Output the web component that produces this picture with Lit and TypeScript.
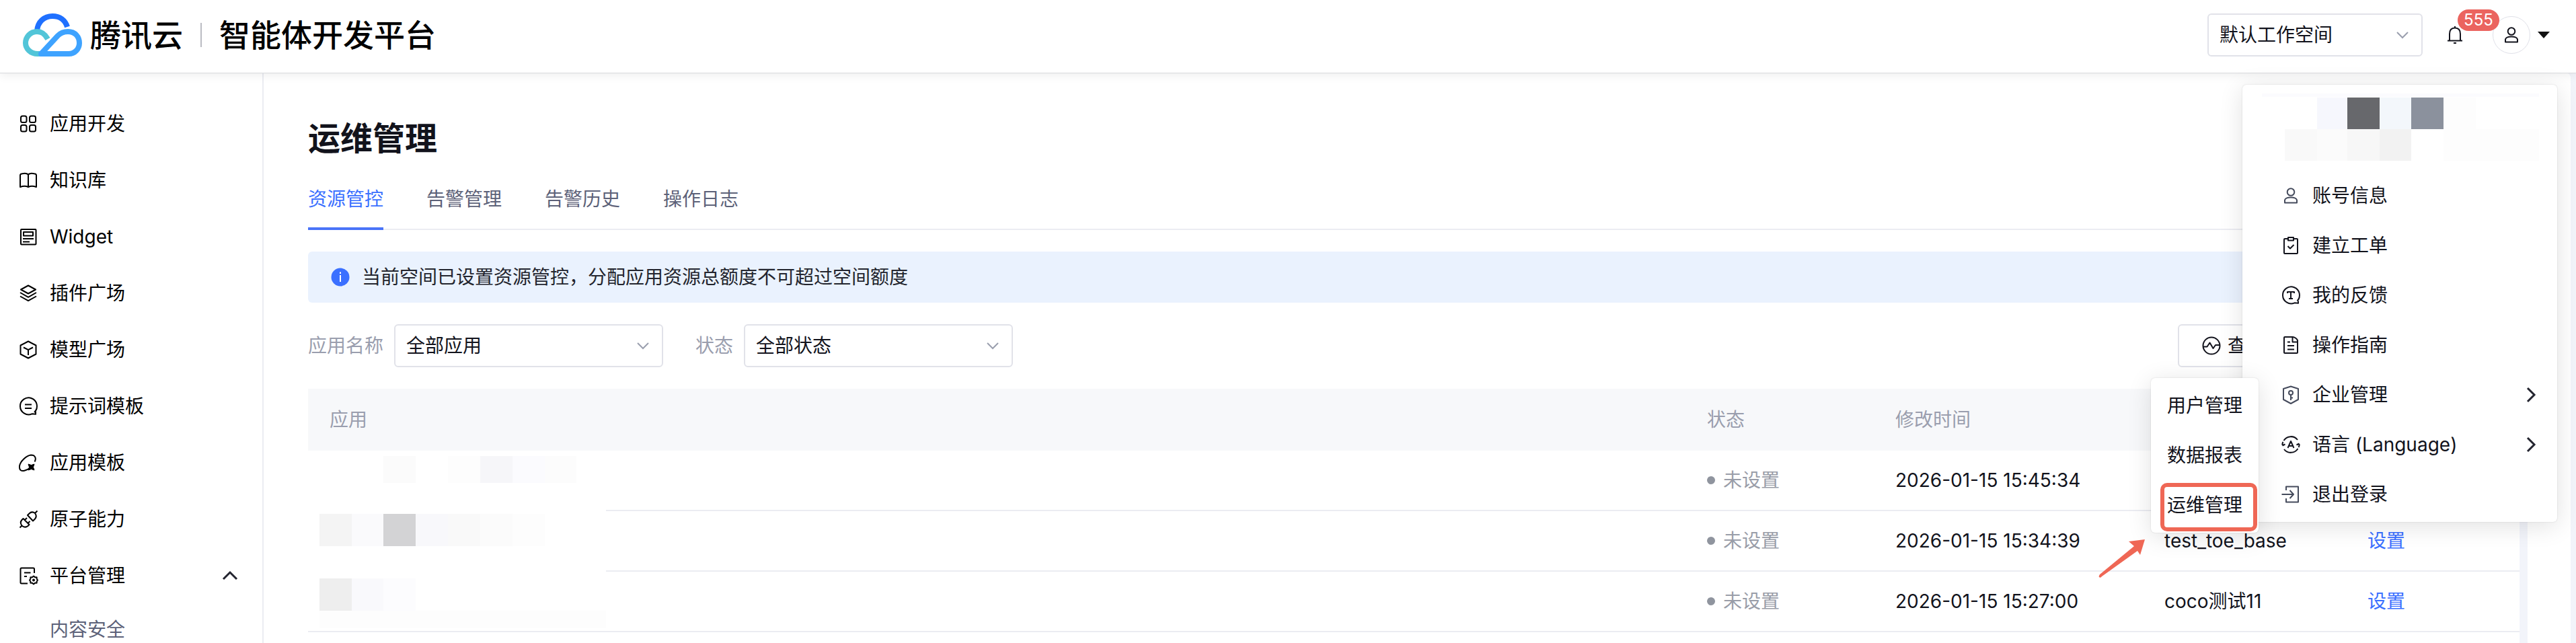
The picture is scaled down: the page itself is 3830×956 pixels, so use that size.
import { LitElement, html, css, svg, TemplateResult } from "lit";
import { customElement, property } from "lit/decorators.js";

const icons: Record<string, TemplateResult> = {
  apps: svg`<rect x="5" y="4.500" width="8.500" height="9.500" rx="2.500"/><rect x="18" y="4.500" width="9" height="9.500" rx="2.500"/><rect x="5" y="18" width="8.500" height="9.500" rx="2.500"/><rect x="18" y="18" width="9" height="9.500" rx="2.500"/>`,
  book: svg`<path d="M16 7.500C14 5.500 10 5.500 7 6.200Q4 6.500 4 8.500V26C8 24.500 13 24.500 16 26C19 24.500 24 24.500 28 26V8.500Q28 6.500 25 6.200C22 5.500 18 5.500 16 7.500ZM16 7.500V26"/>`,
  widget: svg`<rect x="5" y="5" width="22.500" height="22.500" rx="1"/><rect x="9" y="9" width="14" height="5.500"/><path d="M8 19H24M8 23.500H18"/>`,
  layers: svg`<path d="M16 4.500L27 10.500L16 16.500L5 10.500ZM4 15L16 21.800L28 15M4 20.500L16 27.200L28 20.500"/>`,
  cube: svg`<path d="M16 3.500L27.500 9.500V22.500L16 28.500L4.500 22.500V9.500ZM9 12.500L16 16.200L23 12.500M16 16.200V24"/>`,
  prompt: svg`<path d="M25.500 24.500A12.500 12.500 0 1 0 21.500 27.300L27 27.800V24.500ZM11 13.500H21M11 19H21"/>`,
  template: svg`<path d="M25.500 14.500C28.500 9 26 4.500 20 4.500C13 5.500 4 14 3 21C2.500 27.500 6 29 11 27.500C14 26.800 16 25.600 18 24"/><path d="M16 18L20.500 19.500L25 18L23.500 22.500L25 27L20.500 25.500L16 27L17.500 22.500Z" fill="currentColor" stroke-width="1"/>`,
  plug: svg`<path d="M3.500 28.500L6.500 25.500M6.500 17Q3 21 6.500 25.500Q11 29.500 15.500 26L17.500 24L8.500 15ZM11 17L14 14M15.500 22L18.500 19M29.500 3.500L26 7M15 10L17.500 7.500Q21.500 3.500 26 7Q29.500 11.500 26 15.500L23 18.500Z"/>`,
  platform: svg`<path d="M25 12V6Q25 4.500 23.500 4.500H6Q4.500 4.500 4.500 6V26Q4.500 27.500 6 27.500H15M10 11.500H19.500M10 17H14"/><path d="M24 16.500L26 18.300L28.600 18.200L28.700 20.800L30 22.500L28.700 24.300L28.600 26.800L26 26.800L24 28.500L22 26.800L19.400 26.800L19.300 24.300L18 22.500L19.300 20.800L19.400 18.200L22 18.300Z"/><circle cx="24" cy="22.500" r="1"/>`,
  user: svg`<circle cx="16" cy="10.500" r="5.300"/><path d="M7 26.500V22.500Q8 18.500 16 18.500Q24 18.500 25 22.500V26.500Z"/>`,
  ticket: svg`<path d="M12 6H7Q6 6 6 7V27Q6 28 7 28H25Q26 28 26 27V7Q26 6 25 6H20M12 4H20V8.500H12ZM11.500 17L15 20.500L20.500 15"/>`,
  feedback: svg`<path d="M25.500 24.500A12.500 12.500 0 1 0 21.500 27.300L27 27.800V24.500M11 13V11H21V13M16 11V21M13 21H19"/>`,
  guide: svg`<path d="M19 4H7Q6 4 6 5V27Q6 28 7 28H25Q26 28 26 27V9Q24 5 19 4ZM18.500 4V11.500H26M11 11.500H15M11 17H21M11 22.500H21"/>`,
  shield: svg`<path d="M16 3.500L27 7V23L16 29L5 23V7Z"/><circle cx="16" cy="13" r="3"/><path d="M16 16V24M16 20.500H19"/>`,
  language: svg`<path d="M5.500 10A12.500 12.500 0 0 1 26 9M26.500 22A12.500 12.500 0 0 1 6 23M28.500 15V17.500A12.500 12.500 0 0 1 27.500 20M24.500 16.500L28.500 14.500M3.500 17V14.500A12.500 12.500 0 0 1 4.500 12M7.500 15.500L3.500 17.500M11.500 21L16 11L20.500 21M13 18H19"/>`,
  logout: svg`<path d="M9 10V4.500H27V27.500H9V22M2.500 16H19.500M14.500 10L20 16L14.500 22"/>`,
  pulse: svg`<circle cx="16" cy="16" r="12.500"/><path d="M4 17.500H9.500L13.500 11.500L18.500 20L22 15H28"/>`,
  bell: svg`<path d="M16 3V5M8 24V14.500Q8 5.500 16 5.500Q24 5.500 24 14.500V24M5 24.500H27M14 28H18"/>`,
};

@customElement("line-icon")
export class LineIcon extends LitElement {
  static styles = css`
    :host { display: block; flex: none; width: 32px; height: 32px; }
    svg { display: block; width: 100%; height: 100%; fill: none; stroke: currentColor; stroke-width: 2; stroke-linejoin: round; }
  `;
  @property() name = "apps";
  render() {
    return html`<svg viewBox="0 0 32 32" aria-hidden="true">${icons[this.name]}</svg>`;
  }
}

@customElement("drop-down")
export class DropDown extends LitElement {
  static styles = css`
    :host { display: flex; align-items: center; gap: 16px; font-size: 28px; color: #9a9eae; }
    .box { display: grid; width: var(--select-width, 400px); align-items: center; }
    select {
      grid-area: 1 / 1; width: 100%; height: 64px; padding: 0 56px 0 16px; border: 2px solid #e1e2e9; border-radius: 6px;
      appearance: none; background: #fff; color: #12131c; font: inherit;
    }
    svg { grid-area: 1 / 1; justify-self: end; margin-right: 20px; width: 20px; height: 20px; fill: none; stroke: #9a9fae; stroke-width: 2; pointer-events: none; }
  `;
  @property() label = "";
  @property() value = "";
  @property({ type: Boolean }) bare = false;
  render() {
    return html`
      ${this.bare ? "" : html`<label for="field">${this.label}</label>`}
      <div class="box">
        <select id="field" aria-label=${this.label}><option>${this.value}</option></select>
        <svg viewBox="0 0 20 20"><path d="M2 6L10 14L18 6"/></svg>
      </div>`;
  }
}

const nav = [
  ["apps", "应用开发"],
  ["book", "知识库"],
  ["widget", "Widget"],
  ["layers", "插件广场"],
  ["cube", "模型广场"],
  ["prompt", "提示词模板"],
  ["template", "应用模板"],
  ["plug", "原子能力"],
];

const menu: [string, string, boolean][] = [
  ["user", "账号信息", false],
  ["ticket", "建立工单", false],
  ["feedback", "我的反馈", false],
  ["guide", "操作指南", false],
  ["shield", "企业管理", true],
  ["language", "语言 (Language)", true],
  ["logout", "退出登录", false],
];
const softIcons = ["user", "shield", "logout"];

const rows = [
  { time: "2026-01-15 15:45:34", user: "", action: "" },
  { time: "2026-01-15 15:34:39", user: "test_toe_base", action: "设置" },
  { time: "2026-01-15 15:27:00", user: "coco测试11", action: "设置" },
];

type Block = [number, number, number, number, string];
const tableMask: Block[] = [
  [0, 0, 443, 260, "#ffffff"],
  [112, 4, 48, 40, "#fbfbfb"], [208, 4, 48, 40, "#fdfdfd"], [256, 4, 48, 40, "#f6f6f9"], [304, 4, 48, 40, "#fbfbfe"], [352, 4, 47, 40, "#fcfcfc"],
  [17, 90, 48, 48, "#f4f4f4"], [65, 90, 47, 48, "#fafafc"], [112, 90, 48, 48, "#d3d3d5"], [160, 90, 48, 48, "#f8f8fb"], [208, 90, 48, 48, "#f9f9f9"], [256, 90, 48, 48, "#fbfbfb"], [304, 90, 48, 48, "#fdfdfd"],
  [17, 186, 48, 48, "#eeeeee"], [65, 186, 47, 48, "#f9f9fc"], [112, 186, 48, 48, "#fcfcfe"],
  [17, 234, 426, 26, "#fdfdfd"],
];
const accountMask: Block[] = [
  [0, 0, 412, 5, "#fbfbfe"],
  [82, 6, 45, 47, "#f6f7fd"], [127, 6, 48, 47, "#67686c"], [175, 6, 47, 47, "#f3f7fb"], [222, 6, 48, 47, "#8b919d"], [270, 6, 48, 47, "#fdfdfd"],
  [34, 53, 48, 47, "#f9f9f9"], [82, 53, 45, 47, "#fbfbfb"], [127, 53, 48, 47, "#f7f7f7"], [175, 53, 47, 47, "#f2f2f2"], [270, 53, 142, 47, "#fdfdfd"],
];
const blocks = (list: Block[]) =>
  list.map(([x, y, w, h, c]) => svg`<rect x=${x} y=${y} width=${w} height=${h} fill=${c} />`);

@customElement("app-root")
export class AppRoot extends LitElement {
  static styles = css`
    :host {
      display: flex; flex-direction: column; position: relative; height: 100vh; overflow: hidden; background: #f2f4fa;
      font-family: Inter, "Noto Sans CJK SC", sans-serif; font-size: 28px; line-height: 40px; color: #12131c;
    }
    * { box-sizing: border-box; }
    button { font: inherit; color: inherit; background: none; border: 0; padding: 0; text-align: left; }
    a { color: inherit; text-decoration: none; }

    .top {
      position: relative; z-index: 1; flex: none; display: flex; align-items: center; height: 108px; padding: 0 38px 4px 32px; background: #fff;
      box-shadow: 0 1px 1px #dcdde0, 0 4px 14px rgba(0, 0, 0, 0.07);
    }
    .logo { width: 92px; height: 72px; }
    .brand { margin-left: 10px; font-size: 46px; line-height: 64px; font-weight: 500; color: #000; }
    .bar { width: 2px; height: 36px; margin: 0 26px; background: #babbc2; }
    .product { flex: 1; font-size: 46px; line-height: 64px; font-weight: 500; color: #000; }
    .space { --select-width: 320px; }
    .bell { display: grid; margin-left: 32px; }
    .badge {
      position: absolute; right: 114px; top: 14px; z-index: 1; width: 62px; height: 32px; border-radius: 16px;
      background: #eb645f; color: #fff; font-size: 24px; line-height: 32px; text-align: center;
    }
    .avatar { display: grid; place-items: center; width: 56px; height: 56px; margin-left: 40px; border: 1px solid #dfe0e8; border-radius: 50%; }
    .caret { margin-left: 10px; width: 20px; height: 12px; }

    .body { flex: 1; display: flex; min-height: 0; }
    .side { flex: none; width: 392px; padding: 34px 36px 0 26px; border-right: 2px solid #ebecf2; background: #fff; overflow: hidden; color: #000; }
    .link { display: flex; align-items: center; gap: 16px; width: 100%; height: 84px; }
    .link span { flex: 1; }
    .chev { width: 24px; height: 24px; fill: none; stroke: #23242f; stroke-width: 3; }
    .sub { display: block; padding: 18px 0 0 48px; color: #5c6178; }

    .main { flex: 1; display: flex; flex-direction: column; min-width: 0; margin-right: 8px; padding: 66px 64px 0 66px; border-radius: 0 8px 0 0; background: #fff; }
    h1 { margin: 0; font-size: 48px; line-height: 64px; font-weight: 600; }
    .tabs { display: flex; gap: 64px; margin-top: 30px; border-bottom: 2px solid #ebecf2; color: #5c6178; }
    .tab { height: 74px; margin-bottom: -2px; padding: 8px 0 22px; border-bottom: 4px solid transparent; }
    .tab.on { color: #3b70ff; border-color: #4a74f8; }
    .notice { display: flex; align-items: center; gap: 16px; height: 76px; margin-top: 32px; padding: 0 32px; border-radius: 6px; background: #eaf2fe; color: #23252e; }
    .info { width: 32px; height: 32px; }
    .filters { display: flex; align-items: center; gap: 48px; margin-top: 32px; }
    .usage { display: flex; align-items: center; gap: 8px; width: 508px; height: 64px; margin: 0 12px 0 auto; padding: 0 32px; border: 2px solid #e1e2e9; border-radius: 6px; }

    .grid { position: relative; flex: 1; min-height: 0; margin-top: 32px; padding-right: 12px; background: linear-gradient(#f2f4fa, #f2f4fa) right / 12px 100% no-repeat; }
    table { width: 100%; border-collapse: separate; border-spacing: 0; table-layout: fixed; background: #fff; }
    th, td { padding: 0 32px; text-align: left; font-weight: 400; white-space: nowrap; }
    th { height: 92px; background: #f7f8fa; color: #9a9eae; }
    td { height: 90px; border-bottom: 2px solid #ebecf2; }
    .c-state { width: 280px; }
    .c-time { width: 400px; }
    .c-user { width: 302px; }
    .c-op { width: 258px; }
    .state { display: flex; align-items: center; gap: 12px; color: #999da8; }
    .state i { width: 12px; height: 12px; border-radius: 50%; background: #8f949e; }
    .set { color: #3b70ff; }
    .mask { position: absolute; left: 0; top: 96px; width: 443px; height: 260px; }

    .panel { position: absolute; z-index: 2; top: 126px; right: 28px; width: 468px; padding: 13px 29px 4px; border-radius: 6px; background: #fff; box-shadow: 0 6px 36px rgba(0, 0, 0, 0.12), 0 0 2px rgba(0, 0, 0, 0.16); }
    .who { display: block; width: 412px; height: 100px; margin-bottom: 15px; }
    .item { display: flex; align-items: center; gap: 16px; width: 100%; height: 74px; padding-left: 27px; }
    .item span { flex: 1; }
    .soft { color: #454b5c; }
    .fly { position: absolute; z-index: 3; top: 436px; right: 444px; width: 160px; padding: 4px 0; border-radius: 6px; background: #fff; box-shadow: 0 6px 36px rgba(0, 0, 0, 0.12), 0 0 2px rgba(0, 0, 0, 0.16); }
    .fly button { display: block; width: 100%; height: 74px; padding: 0 24px; white-space: nowrap; }
    .ring { position: absolute; left: 14px; top: 156px; width: 144px; height: 72px; border: 6px solid #ef6755; border-radius: 10px; pointer-events: none; }
    .arrow { position: absolute; left: -80px; top: 238px; width: 72px; height: 60px; fill: #ef6755; }
  `;

  render() {
    return html`
      <header class="top">
        <svg class="logo" viewBox="0 0 92 72" fill="none" aria-hidden="true">
          <path d="M23 30C24 16 34 8 46 8C57 8 65 14 68 24" stroke="#1f70ff" stroke-width="8"/>
          <path d="M39 42C34 33 29 31 23 31C13 31 6 39 6 48C6 56 13 64 24 64H30" stroke="#52c5d8" stroke-width="8"/>
          <path d="M29 64L54 37C59 32 64 31 69 31C80 31 86 39 86 48C86 56 80 64 70 64Z" stroke="#3ea3ff" stroke-width="8" stroke-linejoin="round"/>
        </svg>
        <span class="brand">腾讯云</span>
        <span class="bar"></span>
        <span class="product">智能体开发平台</span>
        <drop-down class="space" bare label="工作空间" value="默认工作空间"></drop-down>
        <button class="bell" aria-label="消息"><line-icon name="bell"></line-icon></button>
        <span class="badge">555</span>
        <button class="avatar" aria-label="账号"><line-icon name="user"></line-icon></button>
        <svg class="caret" viewBox="0 0 20 12"><path d="M1 1H19L10 11Z" fill="#111"/></svg>
      </header>

      <div class="body">
        <nav class="side">
          ${nav.map(([icon, text]) => html`<a class="link" href="#"><line-icon name=${icon}></line-icon><span>${text}</span></a>`)}
          <button class="link"><line-icon name="platform"></line-icon><span>平台管理</span>
            <svg class="chev" viewBox="0 0 24 24"><path d="M2 17L12 7L22 17"/></svg></button>
          <a class="sub" href="#">内容安全</a>
        </nav>

        <main class="main">
          <h1>运维管理</h1>
          <div class="tabs" role="tablist">
            ${["资源管控", "告警管理", "告警历史", "操作日志"].map((t, i) => html`<button role="tab" class="tab ${i ? "" : "on"}">${t}</button>`)}
          </div>
          <div class="notice">
            <svg class="info" viewBox="0 0 32 32"><circle cx="16" cy="16" r="13.500" fill="#3b70ff"/><path d="M16 13V23M16 8.500V11" stroke="#fff" stroke-width="2"/></svg>
            <span>当前空间已设置资源管控，分配应用资源总额度不可超过空间额度</span>
          </div>
          <div class="filters">
            <drop-down label="应用名称" value="全部应用"></drop-down>
            <drop-down label="状态" value="全部状态"></drop-down>
            <button class="usage"><line-icon name="pulse"></line-icon>查看</button>
          </div>
          <div class="grid">
            <table>
              <thead>
                <tr><th>应用</th><th class="c-state">状态</th><th class="c-time">修改时间</th><th class="c-user"></th><th class="c-op"></th></tr>
              </thead>
              <tbody>
                ${rows.map((row) => html`<tr>
                  <td></td>
                  <td><span class="state"><i></i>未设置</span></td>
                  <td>${row.time}</td>
                  <td>${row.user}</td>
                  <td>${row.action ? html`<a class="set" href="#">${row.action}</a>` : ""}</td>
                </tr>`)}
              </tbody>
            </table>
            <svg class="mask" viewBox="0 0 443 260" shape-rendering="crispEdges" aria-hidden="true">${blocks(tableMask)}</svg>
          </div>
        </main>
      </div>

      <div class="panel">
        <svg class="who" viewBox="0 0 412 100" shape-rendering="crispEdges" aria-hidden="true">${blocks(accountMask)}</svg>
        ${menu.map(([icon, text, more]) => html`<button class="item"><line-icon class=${softIcons.includes(icon) ? "soft" : ""} name=${icon}></line-icon><span>${text}</span>
          ${more ? html`<svg class="chev" viewBox="0 0 24 24"><path d="M9 2L19 12L9 22"/></svg>` : ""}</button>`)}
        <div class="fly">
          <button>用户管理</button><button>数据报表</button><button>运维管理</button>
          <span class="ring"></span>
          <svg class="arrow" viewBox="0 0 72 60" aria-hidden="true"><path d="M71 2L47 5L55 12L4 54Q2 57 3 58Q5 60 7 57L60 19L64 25Z"/></svg>
        </div>
      </div>
    `;
  }
}
